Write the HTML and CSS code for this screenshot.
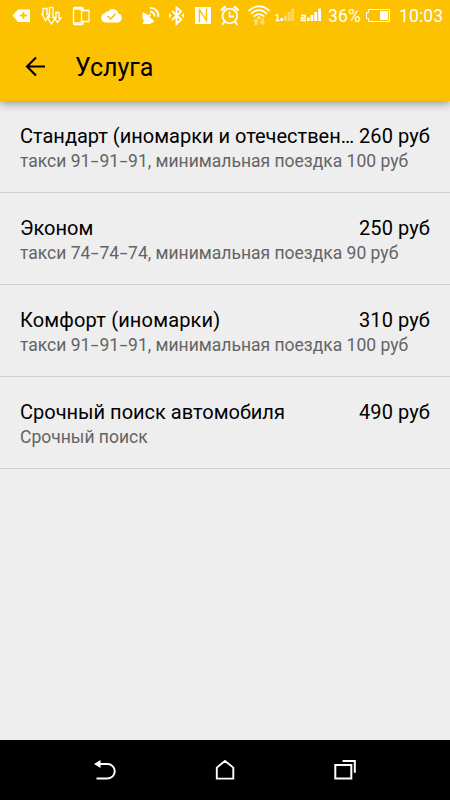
FILE: index.html
```html
<!DOCTYPE html>
<html lang="ru">
<head>
<meta charset="utf-8">
<title>Услуга</title>
<link rel="stylesheet" href="styles.css">
</head>
<body>
<div class="screen">
  <header class="top">
    <div class="status">
      <svg width="36" height="32" viewBox="0 0 36 32"><path fill="#fff" d="M12.500 15.500L18 9.500h12V22H18z"/><path stroke="#fcc200" stroke-width="1.800" d="M20 15.500h7M23.500 12v7"/></svg>
      <svg width="30" height="32" viewBox="36 0 30 32" class="line"><path d="M43 8.500h4v6h2.500l-4 6-3.500-6H43zM49.500 7.500h3.500v10h2.500L51.500 24l-4.500-6.500h2.500zM56 12.500h3v5.500h2l-3.500 4.500-3.500-4.500h2z"/></svg>
      <svg width="30" height="32" viewBox="66 0 30 32" class="line"><path d="M83 10V8.500a1 1 0 0 0-1-1h-7.500a1 1 0 0 0-1 1v15a1 1 0 0 0 1 1H82a1 1 0 0 0 1-1V22M73.500 9H83M73.500 22.800H83"/><path d="M81.500 10.500h7.500v11h-7.500z"/></svg>
      <svg width="34" height="32" viewBox="96 0 34 32"><path fill="#fff" d="M105.500 22.500a4.700 4.700 0 0 1-.8-9.200 5 5 0 0 1 3.800-2 5.500 5.500 0 0 1 9.700 2 4.700 4.700 0 0 1-.7 9.200z"/><path fill="none" stroke="#fcc200" stroke-width="1.700" d="M107.700 16l3 3 5-5.500"/></svg>
      <svg width="34" height="32" viewBox="130 0 34 32"><path fill="#fff" d="M143 12a7.600 7.600 0 0 0 11.500 9.500l-5-4.700 1.700-1.500-1.500-1.500-1.500 1.500z"/><path fill="#fff" d="M144 20l-1.500 4h9z"/><g fill="none" stroke="#fff" stroke-width="2"><path d="M150 11.500a4.500 4.500 0 0 1 4.500 5"/><path d="M150 7.800a8 8 0 0 1 8.300 9.200" stroke-width="1.700"/></g></svg>
      <svg width="26" height="32" viewBox="164 0 26 32"><path fill="none" stroke="#fff" stroke-width="1.800" d="M172 11l9.200 8.500-4.700 4.500V7.500l4.700 4L172 20"/><path fill="#fff" d="M169 13l2.700 2.600-2.700 2.600zM184 13l-2.700 2.600 2.700 2.600z"/></svg>
      <svg width="25" height="32" viewBox="190 0 25 32"><path fill="#fff" d="M195 7h16v17h-16z"/><path fill="none" stroke="#fcc200" stroke-width="1.400" d="M199.500 22.500V10l7 10.500V8.500"/></svg>
      <svg width="29" height="32" viewBox="215 0 29 32"><g fill="none" stroke="#fff" stroke-width="1.800"><circle cx="229.800" cy="16" r="7.300"/><path d="M229.500 11.500v5h4.500M224.500 21.500l-2.200 3.300M235 21.500l2.200 3.300"/><path d="M221 10.500l4.500-4M238.500 10.500l-4.500-4" stroke-width="2.400"/></g></svg>
      <svg width="28" height="32" viewBox="244 0 28 32"><g fill="none" stroke="#fff" stroke-width="1.700"><path d="M248.500 11q10.500-9.500 21 0M251 13.800q8-7.500 16 0M253.800 16.600q5.200-5 10.400 0"/></g><path fill="#fff" d="M257.300 17.700l1.700-1.500 1.700 1.500-1.700 1.500z"/><path fill="#fff" opacity=".45" d="M252.500 21.500l3.500-3.300 3.500 3.300h-2V25h-3v-3.500zM259 21.700h2v-3.500h3v3.500h2l-3.500 3.300z"/></svg>
      <svg width="25" height="32" viewBox="272 0 25 32"><path fill="none" stroke="#fff" stroke-width="1.500" d="M275.500 15.700l2-1V21M275.500 20.500h4"/><g fill="#fff"><path d="M280.500 18h2.500v3h-2.500z"/><g opacity=".42"><path d="M284 15.500h2.800V21H284zM287.700 12h2.800v9h-2.800zM291.300 8.500h2.800V21h-2.800z"/></g></g></svg>
      <svg width="28" height="32" viewBox="297 0 28 32"><path fill="none" stroke="#fff" stroke-width="1.700" d="M301 15.300h4v2.500h-3.500v2.600h4.500"/><path fill="#fff" d="M307 17.500h2.500V21H307zM310.500 15h2.800v6h-2.800zM314.300 12h2.800v9h-2.800zM318.200 8.500h2.800V21h-2.800z"/></svg>
      <span class="percent">36%</span>
      <svg width="28" height="32" viewBox="364 0 28 32"><path fill="none" stroke="#fff" d="M368.500 9.500h21v12h-21v-3h-2v-6h2z"/><path fill="#fff" d="M380 11h8v9h-8z"/></svg>
      <span class="time">10:03</span>
    </div>
    <div class="toolbar">
      <svg class="back" width="22" height="22" viewBox="0 0 22 22"><path fill="none" stroke="#000" stroke-width="2.100" d="M20 10.500H2M11 1.500l-9 9 9 9"/></svg>
      <h1>Услуга</h1>
    </div>
  </header>
  <main class="list">
    <div class="item">
      <div class="row"><span class="name">Стандарт (иномарки и отечествен…</span><span class="price">260 руб</span></div>
      <div class="note">такси 91<span class="dash">-</span>91<span class="dash">-</span>91, минимальная поездка 100 руб</div>
    </div>
    <div class="item">
      <div class="row"><span class="name">Эконом</span><span class="price">250 руб</span></div>
      <div class="note">такси 74<span class="dash">-</span>74<span class="dash">-</span>74, минимальная поездка 90 руб</div>
    </div>
    <div class="item">
      <div class="row"><span class="name wide">Комфорт (иномарки)</span><span class="price">310 руб</span></div>
      <div class="note">такси 91<span class="dash">-</span>91<span class="dash">-</span>91, минимальная поездка 100 руб</div>
    </div>
    <div class="item">
      <div class="row"><span class="name">Срочный поиск автомобиля</span><span class="price">490 руб</span></div>
      <div class="note">Срочный поиск</div>
    </div>
  </main>
  <nav class="nav">
    <svg width="24" height="24" viewBox="0 0 24 24"><path fill="none" stroke="#fff" stroke-width="2" d="M6 6h8.500a7.200 7.200 0 0 1 0 14.500H3.500"/><path fill="#fff" d="M1 6l6.500-4v8z"/></svg>
    <svg width="24" height="24" viewBox="0 0 24 24"><path fill="none" stroke="#fff" stroke-width="1.900" d="M3.800 20.600V9.600l8.200-6.700 8.300 6.700v11z"/></svg>
    <svg width="24" height="24" viewBox="0 0 24 24"><path fill="none" stroke="#fff" stroke-width="2" d="M2.300 7h16v13.600h-16zM9.500 3h12.300v11.700"/></svg>
  </nav>
</div>
</body>
</html>
```
FILE: styles.css
```css
* { box-sizing: border-box; }
body {
  margin: 0;
  font-family: Roboto, "Liberation Sans", sans-serif;
  color: #000;
}
.screen {
  width: 450px;
  height: 800px;
  display: flex;
  flex-direction: column;
  background: #eee;
}
.top {
  height: 101px;
  flex: none;
  background: #fcc200;
  box-shadow: 0 2px 9px rgba(0, 0, 0, .42);
}
.status {
  height: 32px;
  display: flex;
  color: #fff;
  font-size: 17.5px;
  line-height: 33px;
  white-space: nowrap;
}
.status svg { display: block; flex: none; }
.line { fill: none; stroke: #fff; stroke-width: 1.3; }
.percent { width: 39px; padding-left: 3px; flex: none; letter-spacing: .2px; }
.time { padding-left: 7px; letter-spacing: .15px; }
.toolbar {
  height: 69px;
  display: flex;
  align-items: center;
  padding-left: 25px;
}
.back { margin-right: 28px; }
h1 {
  margin: 2px 0 0;
  font-size: 25px;
  font-weight: 400;
  line-height: 32px;
}
.list { flex: 1; }
.item {
  height: 92px;
  padding: 22px 20px 0;
  border-bottom: 1px solid #cecece;
}
.row {
  display: flex;
  justify-content: space-between;
  font-size: 20px;
  line-height: 26px;
}
.name { white-space: nowrap; }
.wide { letter-spacing: .17px; }
.price {
  flex: none;
  white-space: nowrap;
  letter-spacing: .1px;
}
.note {
  font-size: 17.5px;
  line-height: 25px;
  color: #646464;
  white-space: nowrap;
}
.dash {
  display: inline-block;
  width: 9px;
  text-align: center;
  transform: scaleX(1.6);
}
.nav {
  height: 60px;
  flex: none;
  display: flex;
  justify-content: center;
  align-items: center;
  gap: 96px;
  background: #000;
}
```
